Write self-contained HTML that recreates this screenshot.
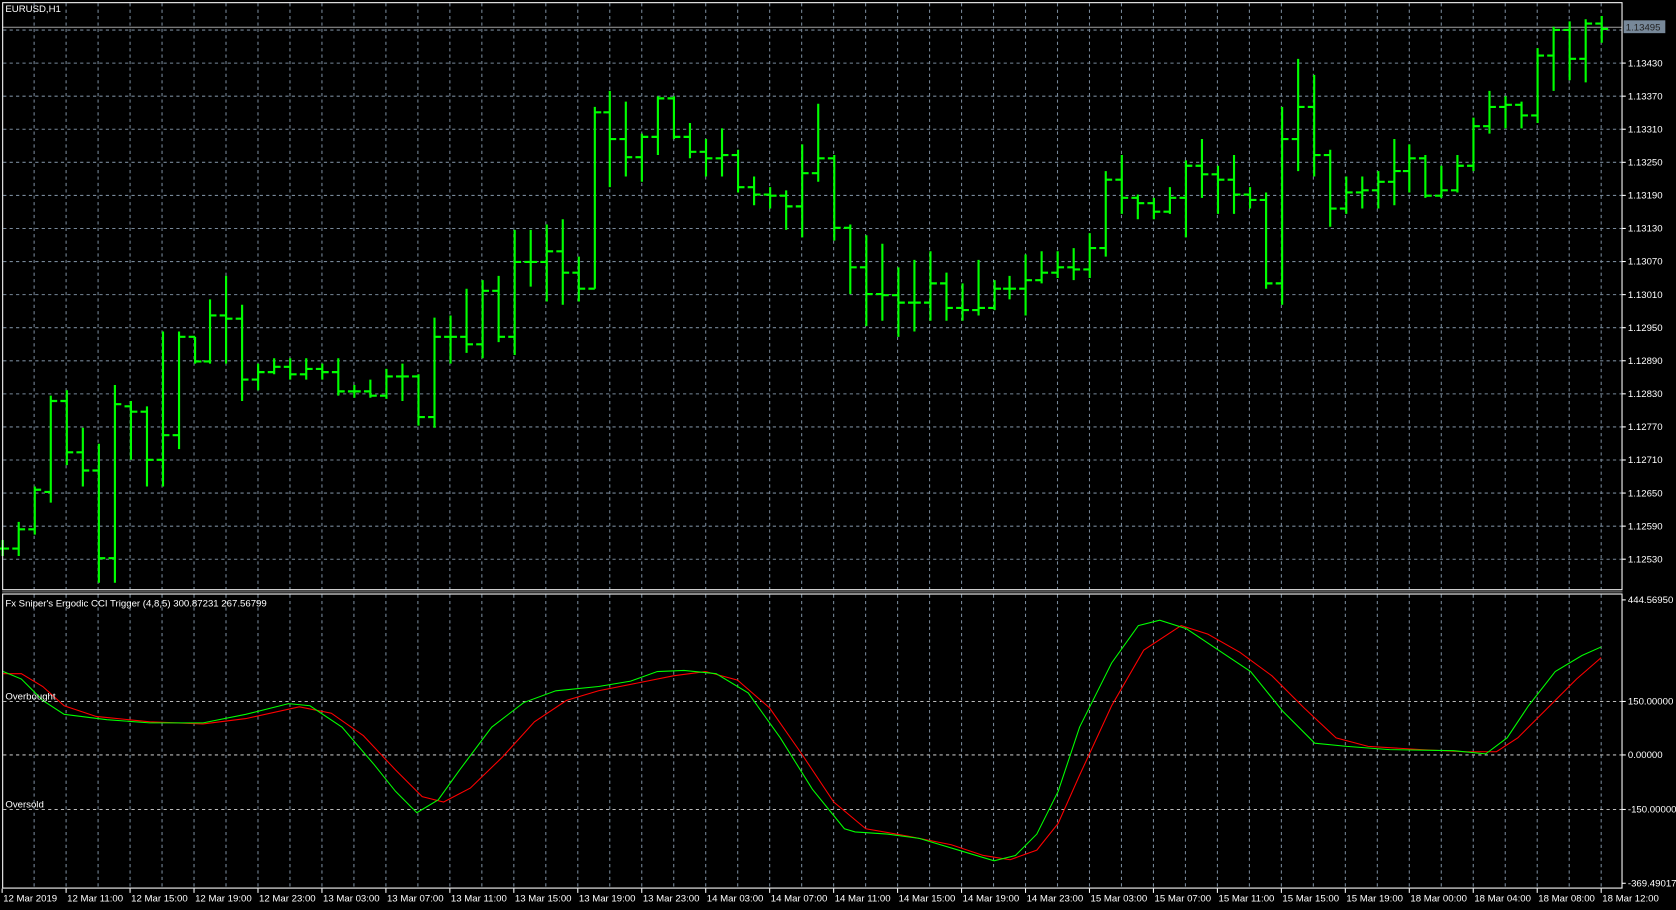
<!DOCTYPE html>
<html><head><meta charset="utf-8"><style>
html,body{margin:0;padding:0;background:#000;overflow:hidden}
svg{display:block}
text{font-family:"Liberation Sans",sans-serif;font-size:9px;fill:#fff}
</style></head><body>
<svg id="s" width="1676" height="910" viewBox="0 0 1568 851" preserveAspectRatio="none" xmlns="http://www.w3.org/2000/svg">
<rect width="1568" height="851" fill="#000"/>
<g id="grid" stroke="#778899" stroke-width="1" stroke-dasharray="3,3"></g>
<line x1="2" y1="25.5" x2="1517" y2="25.5" stroke="#a0a0a0" stroke-width="1"/>
<g id="bars" stroke="#00ff00" stroke-width="2" fill="none"></g>
<polyline id="red" fill="none" stroke="#ff0000" stroke-width="1"/>
<polyline id="grn" fill="none" stroke="#00ff00" stroke-width="1"/>
<g fill="none" stroke="#fff" stroke-width="1">
<rect x="2.5" y="2.5" width="1515" height="549"/>
<rect x="2.5" y="555.5" width="1515" height="275"/>
</g>
<line x1="2" y1="553.5" x2="1518" y2="553.5" stroke="#888" stroke-width="1"/>
<g id="lab"></g>
<text x="5" y="11">EURUSD,H1</text>
<text x="5" y="567" font-size="8.5">Fx Sniper's Ergodic CCI Trigger (4,8,5) 300.87231 267.56799</text>
<text x="5" y="654" font-size="8.5">Overbought</text>
<text x="5" y="755" font-size="8.5">Oversold</text>
<rect x="1519" y="19" width="39" height="12" fill="#778899"/>
<text x="1521" y="28.5" style="fill:#222">1.13495</text>
</svg>
<script>
var NS="http://www.w3.org/2000/svg";
function el(p,t,a,txt){var e=document.createElementNS(NS,t);for(var k in a)e.setAttribute(k,a[k]);if(txt)e.textContent=txt;document.getElementById(p).appendChild(e);return e;}
// vertical grid
for(var x=1498;x>5;x-=29.92){el("grid","line",{x1:x,y1:3,x2:x,y2:551});el("grid","line",{x1:x,y1:556,x2:x,y2:830});}
// horizontal grid main
var prices=[];for(var i=0;i<17;i++){var y=28.1+i*30.93;el("grid","line",{x1:3,y1:y,x2:1517,y2:y});}
for(var i=0;i<16;i++){var y=59+i*30.93;var p=(1.13430-i*0.0006).toFixed(5);el("lab","line",{x1:1517,y1:y,x2:1521,y2:y,stroke:"#fff"});el("lab","text",{x:1523,y:y+3},p);}
// indicator grid
[656,706,757].forEach(function(y){el("grid","line",{x1:3,y1:y,x2:1517,y2:y,stroke:"#bbb"});});
[[561,"444.56950"],[656,"150.00000"],[706,"0.00000"],[757,"-150.00000"],[826,"-369.49017"]].forEach(function(a){el("lab","line",{x1:1517,y1:a[0],x2:1521,y2:a[0],stroke:"#fff"});el("lab","text",{x:1523,y:a[0]+3},a[1]);});
// dates
var d=["12 Mar 2019","12 Mar 11:00","12 Mar 15:00","12 Mar 19:00","12 Mar 23:00","13 Mar 03:00","13 Mar 07:00","13 Mar 11:00","13 Mar 15:00","13 Mar 19:00","13 Mar 23:00","14 Mar 03:00","14 Mar 07:00","14 Mar 11:00","14 Mar 15:00","14 Mar 19:00","14 Mar 23:00","15 Mar 03:00","15 Mar 07:00","15 Mar 11:00","15 Mar 15:00","15 Mar 19:00","18 Mar 00:00","18 Mar 04:00","18 Mar 08:00","18 Mar 12:00"];
for(var i=0;i<d.length;i++){var x=1498-(25-i)*59.84;if(i==0)x=2;el("lab","line",{x1:x,y1:831,x2:x,y2:835,stroke:"#fff"});el("lab","text",{x:x+1,y:843},d[i]);}
// bars
var B=[[505,520,513,513],[488,520,513,495],[455,500,495,458],[370,470,460,375],[365,435,375,423],[400,455,423,440],[415,545,440,522],[360,545,522,378],[375,430,380,385],[380,455,385,430],[310,455,430,407],[310,420,407,315],[315,340,315,338],[280,340,338,295],[258,340,295,298],[285,375,298,355],[340,365,355,348],[335,350,348,343],[335,355,343,350],[335,355,350,345],[340,355,345,348],[335,370,348,366],[360,372,366,366],[355,372,366,370],[345,373,370,352],[340,375,352,352],[350,398,352,390],[297,400,390,315],[295,340,315,315],[270,330,315,322],[262,335,322,272],[258,320,272,315],[215,332,315,245],[215,268,245,245],[210,282,245,235],[205,285,235,255],[240,282,255,270],[100,270,270,105],[85,175,105,130],[95,165,130,147],[125,170,147,128],[90,145,128,92],[90,130,92,128],[115,148,128,142],[130,165,142,148],[120,165,148,145],[140,180,145,175],[165,192,175,182],[175,195,182,183],[178,215,183,193],[135,222,193,162],[97,170,162,148],[145,225,148,213],[210,275,213,250],[220,305,250,275],[228,300,275,276],[250,315,276,283],[243,310,283,283],[235,300,283,265],[255,300,265,288],[265,300,288,290],[243,295,290,288],[262,290,288,270],[258,280,270,270],[238,295,270,262],[235,265,262,255],[235,260,255,250],[232,262,250,252],[218,260,252,232],[160,240,232,168],[145,200,168,185],[182,205,185,190],[185,205,190,198],[175,200,198,185],[150,222,185,155],[130,185,155,163],[155,200,163,168],[145,200,168,182],[175,195,182,187],[180,270,187,265],[100,285,265,130],[55,160,130,100],[70,165,100,145],[140,212,145,195],[165,200,195,180],[165,195,180,178],[160,195,178,170],[130,192,170,160],[135,180,160,148],[145,185,148,183],[155,185,183,178],[145,180,178,155],[110,160,155,118],[85,125,118,100],[90,120,100,98],[95,120,98,108],[45,115,108,52],[25,85,52,28],[20,75,28,55],[18,77,55,22],[15,40,22,27]];
var pd="";for(var i=0;i<B.length;i++){var x=Math.round(2+14.96*i)+0.5,b=B[i];pd+="M"+x+" "+b[0]+"V"+b[1]+"M"+(x-6)+" "+b[2]+"H"+x+"M"+x+" "+b[3]+"H"+(x+6);}
el("bars","path",{d:pd});
function sm(a){var s="";for(var i=0;i<a.length;i+=2)s+=a[i]+","+a[i+1]+" ";return s;}
document.getElementById("grn").setAttribute("points",sm([3,628,20,635,40,655,60,668,100,673,140,676,190,676,230,668,270,658,290,660,320,680,350,715,370,740,390,760,410,748,430,720,460,680,490,657,520,646,560,642,590,637,615,628,640,627,670,630,700,648,730,690,760,738,790,775,800,778,830,780,860,784,900,796,930,805,950,800,970,780,990,740,1010,680,1040,620,1065,585,1085,580,1110,588,1140,608,1170,628,1200,665,1230,695,1260,698,1300,701,1360,702,1390,705,1410,690,1430,660,1455,628,1480,613,1498,605]));
document.getElementById("red").setAttribute("points",sm([3,630,20,630,40,642,60,660,90,670,140,675,190,677,230,672,280,661,310,667,340,688,370,720,395,745,415,750,440,737,470,708,500,675,530,655,560,646,600,638,630,632,660,628,690,636,720,662,750,705,780,750,810,775,850,782,890,790,920,800,945,804,970,795,990,770,1010,725,1040,660,1070,608,1105,585,1130,593,1160,610,1190,632,1220,662,1250,690,1280,698,1330,701,1370,703,1400,703,1420,690,1450,660,1475,635,1498,615]));
</script>
</body></html>
